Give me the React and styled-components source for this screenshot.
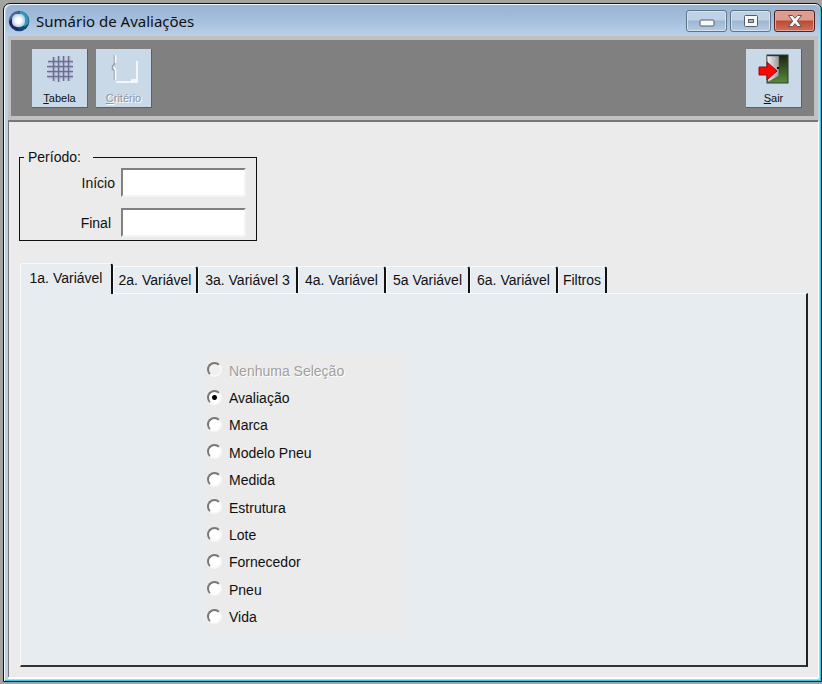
import React, { useState } from "react";
import styled, { createGlobalStyle } from "styled-components";

const GlobalStyle = createGlobalStyle`
  * { box-sizing: border-box; }
  body {
    margin: 0;
    background: #a3a3a3;
    color: #101010;
    font: 14px/16px "Liberation Sans", Arial, sans-serif;
  }
  button, input { font: inherit; color: inherit; }
`;

const Desktop = styled.div`
  display: flex;
  min-height: 100vh;
  padding: 3px 0 2px 3px;
`;

const Window = styled.main`
  flex: 1;
  min-width: 0;
  display: flex;
  flex-direction: column;
  padding: 1px 3px 4px 4px;
  border: 1px solid #111;
  border-radius: 7px 7px 0 0;
  background: #b9d1ea;
  box-shadow: inset 1px 1px #f4f8fc, inset -1px -1px #35c5e0;
`;

const TitleBar = styled.header`
  height: 31px;
  display: flex;
  align-items: center;
  padding: 0 5px 0 2px;
  gap: 6px;
  margin: 0 -2px;
  border-radius: 6px 6px 0 0;
  background: linear-gradient(#98b4d2, #a5bfdc 50%, #bbd1eb);
`;

const Title = styled.h1`
  flex: 1;
  margin: 0;
  font: 15px/20px "Noto Sans", "Open Sans", sans-serif;
  white-space: nowrap;
`;

const WindowButtons = styled.div`
  display: flex;
  gap: 3px;
`;

const WindowButton = styled.button`
  width: 41px;
  height: 22px;
  display: grid;
  place-items: center;
  padding: 0;
  border: 1px solid ${(p) => (p.$close ? "#55201f" : "#5f7389")};
  border-radius: 3px;
  box-shadow: inset 0 0 0 1px ${(p) => (p.$close ? "#dfa69b" : "#d3e1f0")};
  background: ${(p) =>
    p.$close
      ? "linear-gradient(#dc9d90 0 45%, #bd4936 50%, #cf7057)"
      : "linear-gradient(#bfd1e5 0 45%, #9db6d2 50%, #b5cce4)"};
`;

const ToolBar = styled.nav`
  display: flex;
  justify-content: space-between;
  height: 84px;
  padding: 9px 12px 9px 21px;
  border: 4px solid #c0c0c0;
  border-left-width: 3px;
  background: #808080;
`;

const ToolGroup = styled.div`
  display: flex;
  gap: 8px;
`;

const ToolButton = styled.button`
  width: 56px;
  height: 59px;
  display: flex;
  flex-direction: column;
  align-items: center;
  justify-content: space-between;
  padding: 4px 0 3px;
  border: 0 solid #108080;
  border-width: 0 1px 1px 0;
  background: #c9d9e8;
  font-size: 11px;
  line-height: 12px;
  &:disabled {
    color: #8f979f;
    text-shadow: 1px 1px #fff;
  }
`;

const Content = styled.section`
  flex: 1;
  display: flex;
  flex-direction: column;
  align-items: flex-start;
  padding: 27px 10px 10px 11px;
  border: solid #777;
  border-width: 2px 0 0 1px;
  box-shadow: 0 2px #fff, 1px 1px #fff;
  background: #ebebeb;
`;

const Period = styled.fieldset`
  width: 238px;
  margin: 0 0 0 -1px;
  padding: 3px 10px;
  border: 1px solid #111;
`;

const Legend = styled.legend`
  margin-left: -6px;
  padding: 0 12px 0 4px;
`;

const Field = styled.label`
  display: flex;
  align-items: center;
  justify-content: flex-end;
  gap: ${(p) => p.$gap}px;
  & + & { margin-top: 11px; }
`;

const DateInput = styled.input`
  width: 125px;
  height: 29px;
  padding: 2px 4px;
  border: 2px solid;
  border-color: #808080 #f4f4f4 #f4f4f4 #808080;
  border-radius: 0;
  background: #fff;
  outline: 0;
`;

const Tabs = styled.div`
  display: flex;
  align-items: flex-end;
  margin-top: 22px;
`;

const Tab = styled.button`
  width: ${(p) => p.$width}px;
  height: ${(p) => (p.$active ? 31 : 27)}px;
  margin-bottom: ${(p) => (p.$active ? -1 : 0)}px;
  padding: 0 0 ${(p) => (p.$active ? 2 : 0)}px;
  border: solid;
  border-width: 1px 2px 0 1px;
  border-color: #fafafa #111 #fafafa #fafafa;
  border-radius: 3px 3px 0 0;
  background: #e7ecf0;
  white-space: nowrap;
  z-index: ${(p) => (p.$active ? 1 : 0)};
`;

const Panel = styled.div`
  flex: 1;
  align-self: stretch;
  padding: 59px 0 30px 184px;
  border: solid;
  border-width: 1px 2px 2px 1px;
  border-color: #fafafa #222 #333 #fafafa;
  background: #e7ecf0;
`;

const Options = styled.div`
  display: grid;
  grid-template-rows: repeat(10, 1fr);
  width: 200px;
  min-height: 280px;
  padding: 3px 2px;
  background: #ebebeb;
`;

const Option = styled.label`
  display: flex;
  align-items: center;
  gap: 7px;
  color: ${(p) => (p.$disabled ? "#a0a0a0" : "inherit")};
  text-shadow: ${(p) => (p.$disabled ? "1px 1px #fff" : "none")};
`;

const OptionText = styled.span`
  padding-top: 2px;
`;

const Radio = styled.input`
  appearance: none;
  width: 15px;
  height: 15px;
  margin: 0;
  border: 2px solid;
  border-color: #777 #f8f8f8 #f8f8f8 #777;
  border-radius: 50%;
  background: #fff;
  &:checked {
    background: radial-gradient(circle, #000 0 2px, #fff 3px);
  }
  &:disabled { background: #f0f0f0; }
`;

const AppIcon = () => (
  <svg width="22" height="22" viewBox="0 0 22 22" aria-hidden="true">
    <defs>
      <linearGradient id="ring" x1="0" x2="1" y1="0" y2="1">
        <stop offset="0" stopColor="#5d7ba6" />
        <stop offset="0.3" stopColor="#3c5c8e" />
        <stop offset="0.6" stopColor="#25538e" />
        <stop offset="1" stopColor="#092e58" />
      </linearGradient>
      <radialGradient id="core">
        <stop offset="0.4" stopColor="#fff" />
        <stop offset="1" stopColor="#b4cce2" />
      </radialGradient>
    </defs>
    <circle cx="11" cy="11" r="10.3" fill="url(#ring)" />
    <path d="M12 1a10 10 0 0 1 8 13l-4 3 1-8-5-5z" fill="#2a9db8" />
    <path d="M1 12c1 5 6 9 11 8l-5-4-3-8z" fill="#24245a" />
    <rect x="4" y="4" width="13" height="13" rx="5" fill="url(#core)" />
  </svg>
);

const GridIcon = () => (
  <svg width="30" height="32" viewBox="0 0 30 32" fill="none" aria-hidden="true">
    <path d="M10 4v25M15 3v26M20 3v25M25 3v25M3 10h25M3 15h25M3 20h25M3 25h25" stroke="#b4b9d0" />
    <path d="M8.500 4v24M13.500 3v26M18.500 3v25M23.500 3v25M3 8.500h25M2 13.500h26M2 18.500h26M2 23.500h26" stroke="#6c6c94" strokeWidth="1.500" />
  </svg>
);

const CriteriaIcon = () => (
  <svg width="30" height="32" viewBox="0 0 30 32" fill="none" aria-hidden="true">
    <path d="M5.500 2v9l-2 2v3l2 2v9" stroke="#969ea5" strokeWidth="1.500" />
    <path d="M6.500 2v8M4.500 14l2 3v10M7 29h16M28 8v21h-5v-2h4" stroke="#fff" strokeWidth="1.500" />
  </svg>
);

const ExitIcon = () => (
  <svg width="32" height="32" viewBox="0 0 32 32" aria-hidden="true">
    <defs>
      <linearGradient id="green" x1="0" x2="0" y1="0" y2="1">
        <stop offset="0" stopColor="#17230f" />
        <stop offset="1" stopColor="#568e38" />
      </linearGradient>
      <linearGradient id="door" x1="0" x2="1">
        <stop offset="0" stopColor="#f6f6f6" />
        <stop offset="1" stopColor="#999" />
      </linearGradient>
    </defs>
    <rect x="9" y="2" width="21" height="28" fill="url(#green)" stroke="#333a3a" />
    <path d="M9 3h12v20l-11 6z" fill="url(#door)" stroke="#444" strokeWidth=".5" />
    <path d="M19 14h2v2h-2z" fill="#111" />
    <path d="M1 14h8v-5l10 9-10 9v-5H1z" fill="#fb0505" stroke="#8f1010" />
  </svg>
);

const MinimizeIcon = () => (
  <svg width="16" height="12" viewBox="0 0 16 12" aria-hidden="true">
    <rect x="1" y="5" width="14" height="6" rx="1" fill="#f8f8f8" stroke="#555e66" />
  </svg>
);

const MaximizeIcon = () => (
  <svg width="16" height="14" viewBox="0 0 16 14" aria-hidden="true">
    <rect x="1.500" y="1.500" width="13" height="11" rx="1" fill="#f8f8f8" stroke="#555e66" />
    <rect x="5.500" y="5.500" width="5" height="3" fill="#9db6d2" stroke="#555e66" />
  </svg>
);

const CloseIcon = () => (
  <svg width="16" height="14" viewBox="0 0 16 14" aria-hidden="true">
    <path d="M1.500 1.500h4L8 4.300l2.500-2.800h4L10.300 7l4.200 5.500h-4L8 9.700l-2.500 2.800h-4L5.700 7z" fill="#fafafa" stroke="#5e5656" />
  </svg>
);

const tabs = [
  ["1a. Variável", 93],
  ["2a. Variável", 85],
  ["3a. Variável 3", 100],
  ["4a. Variável", 88],
  ["5a Variável", 84],
  ["6a. Variável", 88],
  ["Filtros", 49],
];

const options = [
  "Nenhuma Seleção",
  "Avaliação",
  "Marca",
  "Modelo Pneu",
  "Medida",
  "Estrutura",
  "Lote",
  "Fornecedor",
  "Pneu",
  "Vida",
];

export default function App() {
  const [tab, setTab] = useState(0);
  const [selected, setSelected] = useState("Avaliação");

  return (
    <>
      <GlobalStyle />
      <Desktop>
        <Window>
          <TitleBar>
            <AppIcon />
            <Title>Sumário de Avaliações</Title>
            <WindowButtons>
              <WindowButton aria-label="Minimizar"><MinimizeIcon /></WindowButton>
              <WindowButton aria-label="Maximizar"><MaximizeIcon /></WindowButton>
              <WindowButton $close aria-label="Fechar"><CloseIcon /></WindowButton>
            </WindowButtons>
          </TitleBar>
          <ToolBar>
            <ToolGroup>
              <ToolButton><GridIcon /><span><u>T</u>abela</span></ToolButton>
              <ToolButton disabled><CriteriaIcon /><span><u>C</u>ritério</span></ToolButton>
            </ToolGroup>
            <ToolButton><ExitIcon /><span><u>S</u>air</span></ToolButton>
          </ToolBar>
          <Content>
            <Period>
              <Legend>Período:</Legend>
              <Field $gap={6}>Início<DateInput type="text" /></Field>
              <Field $gap={10}>Final<DateInput type="text" /></Field>
            </Period>
            <Tabs role="tablist">
              {tabs.map(([name, width], i) => (
                <Tab
                  key={name}
                  id={`tab-${i}`}
                  role="tab"
                  aria-selected={tab === i}
                  aria-controls="panel"
                  $active={tab === i}
                  $width={width}
                  onClick={() => setTab(i)}
                >
                  {name}
                </Tab>
              ))}
            </Tabs>
            <Panel id="panel" role="tabpanel" aria-labelledby={`tab-${tab}`}>
              <Options role="radiogroup">
                {options.map((name, i) => (
                  <Option key={name} $disabled={i === 0}>
                    <Radio
                      type="radio"
                      name="variable"
                      disabled={i === 0}
                      checked={selected === name}
                      onChange={() => setSelected(name)}
                    />
                    <OptionText>{name}</OptionText>
                  </Option>
                ))}
              </Options>
            </Panel>
          </Content>
        </Window>
      </Desktop>
    </>
  );
}
